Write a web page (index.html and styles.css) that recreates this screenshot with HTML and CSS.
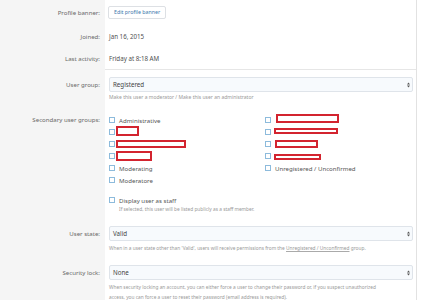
FILE: index.html
```html
<!DOCTYPE html>
<html>
<head>
<meta charset="utf-8">
<link rel="stylesheet" href="styles.css">
</head>
<body>
<div class="form">
  <div class="row row-banner">
    <div class="lbl">Profile banner:</div>
    <div class="ctl"><span class="btn">Edit profile banner</span></div>
  </div>
  <div class="row row-text">
    <div class="lbl">Joined:</div>
    <div class="ctl">Jan 16, 2015</div>
  </div>
  <div class="row row-text row-last">
    <div class="lbl">Last activity:</div>
    <div class="ctl">Friday at 8:18 AM</div>
  </div>
  <div class="row row-group">
    <div class="lbl">User group:</div>
    <div class="ctl">
      <div class="select"><span>Registered</span><svg class="arrows" width="3" height="6" viewBox="0 0 3 6"><path d="M0 2.5 L1.5 0.5 L3 2.5Z M0 3.5 L1.5 5.5 L3 3.5Z" fill="#555"/></svg></div>
      <div class="explain">Make this user a moderator / Make this user an administrator</div>
    </div>
  </div>
  <div class="row row-secondary">
    <div class="lbl">Secondary user groups:</div>
    <div class="ctl">
      <div class="cols">
        <div class="col">
          <div class="opt"><span class="cb"></span>Administrative</div>
          <div class="opt"><span class="cb"></span><span class="red red-a"></span></div>
          <div class="opt"><span class="cb"></span><span class="red red-b"></span></div>
          <div class="opt"><span class="cb"></span><span class="red red-c"></span></div>
          <div class="opt"><span class="cb"></span>Moderating</div>
          <div class="opt"><span class="cb"></span>Moderatore</div>
        </div>
        <div class="col">
          <div class="opt"><span class="cb"></span><span class="red red-d"></span></div>
          <div class="opt"><span class="cb"></span><span class="red red-e"></span></div>
          <div class="opt"><span class="cb"></span><span class="red red-f"></span></div>
          <div class="opt"><span class="cb"></span><span class="red red-g"></span></div>
          <div class="opt"><span class="cb"></span>Unregistered / Unconfirmed</div>
        </div>
      </div>
      <div class="opt opt-staff"><span class="cb"></span>Display user as staff</div>
      <div class="hint">If selected, this user will be listed publicly as a staff member.</div>
    </div>
  </div>
  <div class="row row-state">
    <div class="lbl">User state:</div>
    <div class="ctl">
      <div class="select"><span>Valid</span><svg class="arrows" width="3" height="6" viewBox="0 0 3 6"><path d="M0 2.5 L1.5 0.5 L3 2.5Z M0 3.5 L1.5 5.5 L3 3.5Z" fill="#555"/></svg></div>
      <div class="explain2">When in a user state other than 'Valid', users will receive permissions from the <u>Unregistered / Unconfirmed</u> group.</div>
    </div>
  </div>
  <div class="row row-lock">
    <div class="lbl">Security lock:</div>
    <div class="ctl">
      <div class="select"><span>None</span><svg class="arrows" width="3" height="6" viewBox="0 0 3 6"><path d="M0 2.5 L1.5 0.5 L3 2.5Z M0 3.5 L1.5 5.5 L3 3.5Z" fill="#555"/></svg></div>
      <div class="explain3">When security locking an account, you can either force a user to change their password or, if you suspect unauthorized<br>access, you can force a user to reset their password (email address is required).</div>
    </div>
  </div>
</div>
</body>
</html>
```

FILE: styles.css
```css
html, body {
  margin: 0;
  padding: 0;
  background: #ffffff;
}
body {
  width: 421px;
  height: 300px;
  overflow: hidden;
  font-family: "Noto Sans", "Open Sans", sans-serif;
  color: #4a4a4a;
}
.form {
  width: 416px;
  border-right: 1px solid #e2e2e2;
  min-height: 300px;
}
.row {
  display: grid;
  grid-template-columns: 105px 1fr;
}
.lbl {
  background: #f5f5f5;
  text-align: right;
  padding-right: 5px;
  font-size: 6.1px;
  color: #686868;
  white-space: nowrap;
}
.ctl {
  padding-left: 4px;
  padding-right: 3px;
  font-size: 6.2px;
  color: #505050;
}
.row-banner { height: 26px; }
.row-banner .lbl { padding-top: 6px; line-height: 13px; }
.row-banner .ctl { padding-top: 6px; padding-left: 3px; }
.btn {
  display: inline-block;
  height: 13px;
  box-sizing: border-box;
  border: 1px solid #dde0e4;
  border-radius: 2px;
  padding: 0 5px;
  line-height: 11px;
  font-size: 5.3px;
  color: #3d78ad;
  background: #fff;
}
.row-text .lbl, .row-text .ctl { line-height: 22px; height: 22px; }
.row-last .lbl, .row-last .ctl { line-height: 21px; height: 21px; }
.row-last .ctl { border-bottom: 1px solid #e6e6e6; }
.row-last .lbl { padding-bottom: 1px; }

.row-group .lbl { padding-top: 7px; line-height: 15px; }
.row-group .ctl { padding-top: 7px; padding-bottom: 12px; }
.select {
  height: 15px;
  box-sizing: border-box;
  border: 1px solid #dfe4ea;
  border-radius: 2px;
  background: #f7fafd;
  display: flex;
  align-items: center;
  justify-content: space-between;
  padding: 0 2px 0 3px;
  font-size: 6.2px;
  color: #444;
}
.arrows { display: block; }
.explain {
  margin-top: 1px;
  line-height: 8px;
  font-size: 5px;
  color: #999;
}
.row-secondary .lbl { padding-top: 1px; line-height: 12px; }
.row-secondary .ctl { padding-top: 1px; padding-bottom: 6px; }
.cols {
  display: grid;
  grid-template-columns: 156px 1fr;
}
.opt {
  height: 12px;
  display: flex;
  align-items: center;
  font-size: 6.1px;
  color: #555;
  white-space: nowrap;
}
.cb {
  width: 6px;
  height: 6px;
  box-sizing: border-box;
  border: 1px solid #8dbbdc;
  background: #fff;
  margin-right: 4px;
  flex: none;
}
.red {
  display: block;
  box-sizing: border-box;
  border: 2px solid #d3242f;
  background: #fff;
  flex: none;
}
.red-a { width: 23px; height: 10px; margin-left: -3px; margin-top: -3px; }
.red-b { width: 70px; height: 8px; margin-left: -3px; margin-top: -1px; }
.red-c { width: 36px; height: 10px; margin-left: -3px; margin-top: -1px; }
.red-d { width: 63px; height: 9px; margin-left: 1px; margin-top: -3px; }
.red-e { width: 64px; height: 6px; margin-left: -1px; margin-top: -2px; }
.red-f { width: 43px; height: 8px; margin-left: 0; }
.red-g { width: 47px; height: 6px; margin-left: -1px; margin-top: 1px; }
.opt-staff { margin-top: 9px; height: 10px; }
.hint {
  padding-left: 10px;
  line-height: 8px;
  font-size: 4.8px;
  color: #999;
}
.row-state .lbl { padding-top: 7px; line-height: 15px; }
.row-state .ctl { padding-top: 7px; padding-bottom: 6px; }
.explain2 {
  margin-top: 3px;
  line-height: 8px;
  font-size: 4.8px;
  color: #999;
  white-space: nowrap;
}
.explain2 u { text-decoration-color: #aaa; }
.row-lock .lbl { padding-top: 7px; line-height: 15px; }
.row-lock .ctl { padding-top: 7px; padding-bottom: 6px; }
.explain3 {
  margin-top: 2px;
  line-height: 10px;
  font-size: 4.8px;
  color: #999;
  white-space: nowrap;
}
```
